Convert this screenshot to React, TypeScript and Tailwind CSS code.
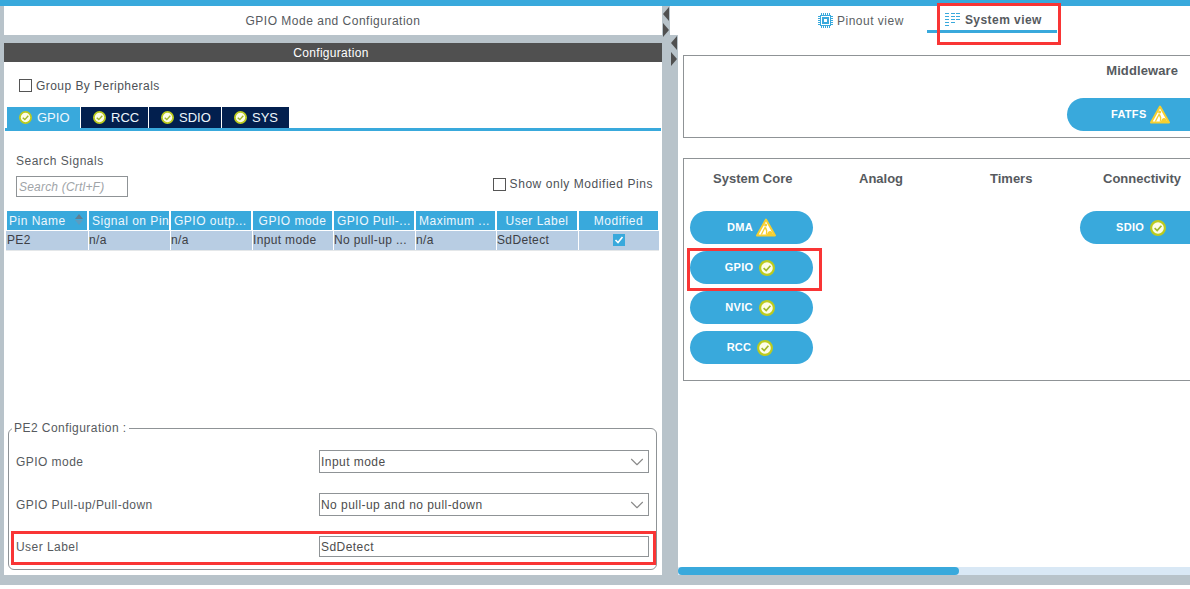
import { ChevronDown } from 'lucide-react';

const font = "font-['Liberation_Sans',Arial,sans-serif]";

function CheckBadge({ size = 16 }: { size?: number }) {
  return (
    <svg width={size} height={size} viewBox="0 0 16 16" className="shrink-0">
      <circle cx="8" cy="8" r="6.9" fill="#fdfde8" stroke="#bccb1e" strokeWidth="2.2" />
      <path d="M4.6 8.2 7.2 10.6 11.4 5.8" fill="none" stroke="#a3b82a" strokeWidth="1.7" />
    </svg>
  );
}

function WarnBadge() {
  return (
    <svg width="20" height="19" viewBox="0 0 20 19" className="shrink-0">
      <path d="M10 1.5 19 17.5H1Z" fill="#fff" stroke="#f7cf2f" strokeWidth="2" strokeLinejoin="round" />
      <circle cx="9.6" cy="7" r="1.5" fill="#f7cf2f" />
      <path d="M9.3 9 7.4 12.5 5.4 16.5M9.5 9.5l1.2 3.2-.3 3.8M12 15.5c.6-2 3-2.6 4-.2l.6 1.2H11.500Z" fill="#f7cf2f" stroke="#f7cf2f" strokeWidth="1.3" />
    </svg>
  );
}

function TabButton({ label, active, width }: { label: string; active?: boolean; width: string }) {
  return (
    <div className={`flex h-[21px] items-center gap-[5px] pl-[12px] text-[13px] ${width} ${active ? 'bg-[#39a9dc]' : 'bg-[#021f4e]'}`}>
      <CheckBadge size={13} />
      <span className="text-[#eef7fc]">{label}</span>
    </div>
  );
}

function Pill({ label, warn }: { label: string; warn?: boolean }) {
  return (
    <div className={`flex h-[33px] w-[123px] items-center justify-center rounded-[17px] bg-[#39a9dc] text-[11px] font-bold tracking-[0.3px] text-white ${warn ? 'gap-[3px]' : 'gap-[6px] pr-[3px]'}`}>
      <span>{label}</span>
      {warn ? <WarnBadge /> : <CheckBadge />}
    </div>
  );
}

const columns = ['Pin Name', 'Signal on Pin', 'GPIO outp...', 'GPIO mode', 'GPIO Pull-...', 'Maximum ...', 'User Label', 'Modified'];
const cells = ['PE2', 'n/a', 'n/a', 'Input mode', 'No pull-up ...', 'n/a', 'SdDetect'];

function SelectBox({ value }: { value: string }) {
  return (
    <div className="flex h-[23px] w-[330px] items-center justify-between border border-[#8f9396] pl-[1px] text-[12px] tracking-[0.45px] text-[#4d4d4d]">
      <span>{value}</span>
      <ChevronDown className="h-[22px] w-[22px] text-[#8a8a8a]" strokeWidth={1.2} />
    </div>
  );
}

function LeftPanel() {
  return (
    <div className="flex w-[658px] shrink-0 flex-col">
      <div className="flex h-[29px] shrink-0 items-center justify-center bg-white text-[12px] tracking-[0.5px] text-[#565a5e]">
        GPIO Mode and Configuration
      </div>
      <div className="mt-[8px] flex h-[19px] shrink-0 items-center justify-center bg-[#505050] pr-[4px] text-[12px] tracking-[0.3px] text-white">
        Configuration
      </div>
      <div className="flex flex-1 flex-col bg-white">
        <div className="mt-[17px] flex h-[13px] items-center pl-[15px] text-[12px] tracking-[0.45px] text-[#4d5156]">
          <span className="mr-[4px] h-[13px] w-[13px] border border-[#555]" />
          Group By Peripherals
        </div>
        <div className="mt-[15px] flex gap-px pl-[3px]">
          <TabButton label="GPIO" active width="w-[73px]" />
          <TabButton label="RCC" width="w-[67px]" />
          <TabButton label="SDIO" width="w-[72px]" />
          <TabButton label="SYS" width="w-[67px]" />
        </div>
        <div className="ml-px mr-px h-[3px] bg-[#39a9dc]" />
        <div className="ml-[12px] mt-[23px] text-[12px] leading-[14px] tracking-[0.5px] text-[#565a5e]">Search Signals</div>
        <div className="mt-[8px] flex items-start justify-between pl-[12px] pr-[9px]">
          <div className="flex h-[21px] w-[112px] items-center border border-[#8f9396] pl-[2px] text-[12px] italic tracking-[0.2px] text-[#a0a4a8]">
            Search (Crtl+F)
          </div>
          <div className="mt-px flex h-[14px] items-center text-[12px] tracking-[0.55px] text-[#4d5156]">
            <span className="mr-[4px] h-[13px] w-[13px] border border-[#555]" />
            Show only Modified Pins
          </div>
        </div>
        <div className="ml-[2px] mt-[14px] w-[653px]">
          <div className="grid grid-cols-[83px_82px_82px_81px_82px_81px_82px_80px] text-[12px] tracking-[0.5px] text-[#eef7fc]">
            {columns.map((c, i) => (
              <div key={c} className={`relative flex h-[19px] items-center overflow-hidden whitespace-nowrap border-white bg-[#39a9dc] ${i === 7 ? 'border-r' : 'border-r-2'} ${i === 0 ? 'border-l' : ''} ${i > 5 || i === 3 ? 'justify-center' : i === 0 ? 'pl-[2px]' : 'pl-[3px]'}`}>
                {c}
                {i === 0 && (
                  <span className="absolute right-[4px] top-[3px] flex flex-col gap-px">
                    <span className="h-0 w-0 border-x-[4px] border-b-[5px] border-x-transparent border-b-[#5f7f92]" />
                    <span className="h-0 w-0 border-x-[4px] border-t-[5px] border-x-transparent border-t-[#5c9cc0]" />
                  </span>
                )}
              </div>
            ))}
          </div>
          <div className="mt-px grid grid-cols-[83px_82px_82px_81px_82px_81px_82px_80px] border-b border-[#e4e7e9] text-[12px] tracking-[0.35px] text-[#3d4045]">
            {cells.map((c, i) => (
              <div key={i} className={`flex h-[19px] items-center overflow-hidden whitespace-nowrap border-r border-white bg-[#b8cde3] pb-px ${i === 0 ? 'pl-[1px]' : ''}`}>
                {c}
              </div>
            ))}
            <div className="flex h-[19px] items-center justify-center bg-[#b8cde3] pb-px">
              <span className="flex h-[12px] w-[12px] items-center justify-center bg-[#39a9dc]">
                <svg width="10" height="10" viewBox="0 0 10 10">
                  <path d="M1.5 5 4 7.5 8.5 2" fill="none" stroke="#fff" strokeWidth="1.6" />
                </svg>
              </span>
            </div>
          </div>
        </div>
        <fieldset className="mx-[4px] mb-[5px] mt-auto h-[149px] w-[649px] rounded-[6px] border border-[#8f9396] pl-[7px]">
          <legend className="-ml-[4px] px-[2px] text-[12px] leading-[14px] tracking-[0.45px] text-[#565a5e]">PE2 Configuration :</legend>
          <div className="mt-[15px] flex h-[23px] items-center justify-between pr-[7px] text-[12px] tracking-[0.45px] text-[#565a5e]">
            GPIO mode
            <SelectBox value="Input mode" />
          </div>
          <div className="mt-[20px] flex h-[23px] items-center justify-between pr-[7px] text-[12px] tracking-[0.45px] text-[#565a5e]">
            GPIO Pull-up/Pull-down
            <SelectBox value="No pull-up and no pull-down" />
          </div>
          <div className="relative mt-[20px] flex h-[21px] items-center justify-between pr-[7px] text-[12px] tracking-[0.45px] text-[#565a5e]">
            User Label
            <div className="flex h-[21px] w-[330px] items-center border border-[#8f9396] pl-[1px] text-[#4d4d4d]">SdDetect</div>
            <div className="absolute -left-[5px] -top-[5px] right-0 h-[34px] border-[3px] border-[#f93535]" />
          </div>
        </fieldset>
      </div>
    </div>
  );
}

function ChipIcon() {
  return (
    <svg width="15" height="15" viewBox="0 0 15 15" className="shrink-0" fill="none" stroke="#39a9dc" shapeRendering="crispEdges">
      <rect x="2.5" y="2.500" width="10" height="10" />
      <rect x="5" y="5" width="5" height="5" strokeWidth="2" />
      <path d="M3.500 0v2M5.500 0v2M7.500 0v2M9.500 0v2M11.500 0v2M3.500 13v2M5.500 13v2M7.500 13v2M9.500 13v2M11.500 13v2M0 3.500h2M0 5.500h2M0 7.500h2M0 9.500h2M0 11.500h2M13 3.500h2M13 5.500h2M13 7.500h2M13 9.500h2M13 11.500h2" strokeWidth="1" />
    </svg>
  );
}

function SystemIcon() {
  return (
    <svg width="15" height="14" viewBox="0 0 15 14" className="shrink-0" fill="none" stroke="#39a9dc" shapeRendering="crispEdges">
      <path d="M0 .5h4M0 3.500h4M0 6.500h4M0 9.500h4M0 12.500h4M5.500 .5h4M5.500 3.500h4M5.500 6.500h4M5.500 9.500h4M11 .5h4M11 3.500h4M11 6.500h4" />
    </svg>
  );
}

const headingText = 'text-[13px] font-bold leading-[14px] text-[#565a5e]';

function RightPanel() {
  return (
    <div className="flex min-w-0 flex-1 flex-col">
      <div className="relative flex h-[29px] shrink-0 bg-white pl-[148px] text-[12px] tracking-[0.5px]">
        <div className="flex h-[29px] items-center gap-[4px] text-[#5b5f63]">
          <ChipIcon />
          Pinout view
        </div>
        <div className="ml-[23px] h-[27px] w-[130px] border-b-[3px] border-[#39a9dc]">
          <div className="flex h-[24px] items-center gap-[5px] pl-[18px] pt-[4px] font-bold tracking-[0.45px] text-[#565a5e]">
            <SystemIcon />
            System view
          </div>
        </div>
        <div className="absolute left-[267px] top-[-3px] h-[42px] w-[124px] border-[3px] border-[#f93535]" />
      </div>
      <div className="ml-[8px] flex flex-1 flex-col bg-white pl-[5px]">
        <div className="mt-[20px] flex h-[83px] flex-col items-end border border-r-0 border-[#8f9396]">
          <div className={`mr-[12px] mt-[8px] tracking-[0.1px] ${headingText}`}>Middleware</div>
          <div className="-mr-[2px] mt-[20px] h-[33px] w-[125px]">
            <div className="flex h-[33px] items-center gap-[3px] rounded-l-[17px] bg-[#39a9dc] pl-[44px] text-[11px] font-bold tracking-[0.3px] text-white">
              FATFS <WarnBadge />
            </div>
          </div>
        </div>
        <div className="mt-[20px] grid h-[223px] grid-cols-[136px_120px_140px_1fr] border border-r-0 border-[#8f9396]">
          <div className="flex flex-col items-start pl-[6px]">
            <div className={`ml-[23px] mt-[13px] ${headingText}`}>System Core</div>
            <div className="mt-[25px] flex flex-col gap-[7px]">
              <Pill label="DMA" warn />
              <div className="relative">
                <Pill label="GPIO" />
                <div className="absolute -left-[3px] -top-[3px] h-[43px] w-[135px] border-[3px] border-[#f93535]" />
              </div>
              <Pill label="NVIC" />
              <Pill label="RCC" />
            </div>
          </div>
          <div className={`mt-[13px] pl-[39px] ${headingText}`}>Analog</div>
          <div className={`mt-[13px] pl-[50px] ${headingText}`}>Timers</div>
          <div className="flex flex-col items-start">
            <div className={`ml-[23px] mt-[13px] ${headingText}`}>Connectivity</div>
            <div className="mt-[25px] flex h-[33px] w-full items-center gap-[6px] rounded-l-[17px] bg-[#39a9dc] pl-[36px] text-[11px] font-bold tracking-[0.3px] text-white">
              SDIO <CheckBadge />
            </div>
          </div>
        </div>
        <div className="-ml-[5px] mt-auto h-[8px] bg-[#d9e8f5]">
          <div className="h-[8px] w-[281px] rounded-[4px] bg-[#39a9dc]" />
        </div>
      </div>
    </div>
  );
}

export default function App() {
  return (
    <div className={`flex h-[589px] w-[1190px] flex-col overflow-hidden bg-white ${font}`}>
      <div className="h-[6px] shrink-0 bg-[#39a9dc]" />
      <div className="relative flex h-[579px] shrink-0 bg-[#b8c3ca] pb-[10px] pl-[4px]">
        <LeftPanel />
        <div className="w-[8px] shrink-0" />
        <RightPanel />
        <span className="absolute left-[663px] top-[1px] h-0 w-0 border-y-[7px] border-r-[6px] border-y-transparent border-r-[#505050]" />
        <span className="absolute left-[663px] top-[17px] h-0 w-0 border-y-[7px] border-l-[6px] border-y-transparent border-l-[#505050]" />
        <span className="absolute left-[671px] top-[30px] h-0 w-0 border-y-[7px] border-r-[6px] border-y-transparent border-r-[#505050]" />
        <span className="absolute left-[671px] top-[46px] h-0 w-0 border-y-[7px] border-l-[6px] border-y-transparent border-l-[#505050]" />
      </div>
      <div className="flex-1 bg-white" />
    </div>
  );
}
